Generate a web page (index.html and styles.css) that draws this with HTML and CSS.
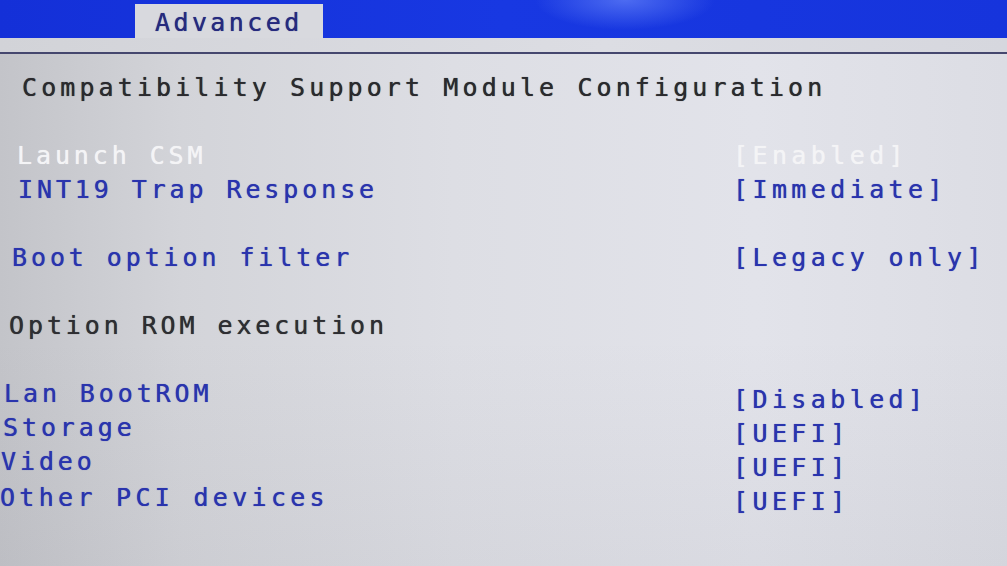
FILE: index.html
```html
<!DOCTYPE html>
<html lang="en">
<head>
<meta charset="utf-8">
<title>Advanced - CSM Configuration</title>
<link rel="stylesheet" href="styles.css">
</head>
<body>
<div class="screen">
  <header class="topbar">
    <div class="tab">Advanced</div>
  </header>
  <div class="band"></div>
  <div class="rule"></div>
  <main class="panel">
    <h1 class="title">Compatibility Support Module Configuration</h1>

    <section class="group">
      <div class="row"><span class="label ind-17 muted">Launch CSM</span><span class="value muted">[Enabled]</span></div>
      <div class="row"><span class="label ind-18 link">INT19 Trap Response</span><span class="value link">[Immediate]</span></div>
    </section>

    <section class="group">
      <div class="row"><span class="label ind-12 link">Boot option filter</span><span class="value link">[Legacy only]</span></div>
    </section>

    <section class="group">
      <div class="row"><span class="label ind-9 dark">Option ROM execution</span></div>
    </section>

    <section class="group">
      <div class="row"><span class="label ind-4 link">Lan BootROM</span><span class="value link lower">[Disabled]</span></div>
      <div class="row"><span class="label ind-3 link">Storage</span><span class="value link lower">[UEFI]</span></div>
      <div class="row"><span class="label ind-1 link">Video</span><span class="value link lower">[UEFI]</span></div>
      <div class="row"><span class="label ind-0 link wide">Other PCI devices</span><span class="value link lower">[UEFI]</span></div>
    </section>
  </main>
</div>
</body>
</html>
```

FILE: styles.css
```css
html, body {
  margin: 0;
  padding: 0;
}

body {
  width: 1007px;
  height: 566px;
  overflow: hidden;
  background: #d6d7dc;
  font-family: "DejaVu Sans Mono", "Liberation Mono", monospace;
}

.screen {
  width: 1007px;
  height: 566px;
  display: flex;
  flex-direction: column;
  background:
    linear-gradient(180deg, rgba(0,0,0,0) 60%, rgba(120,120,130,0.08) 100%),
    linear-gradient(90deg, #c3c4c9 0%, #d3d4d9 18%, #dddee4 45%, #e2e3ea 75%, #dcdde4 100%);
}

.topbar {
  height: 38px;
  flex: none;
  display: flex;
  align-items: flex-end;
  padding-left: 135px;
  background:
    radial-gradient(ellipse 90px 30px at 625px 0px, rgba(120,150,255,0.55), rgba(20,50,225,0) 100%),
    linear-gradient(90deg, #1430d8 0%, #1838e2 50%, #1634dc 100%);
}

.tab {
  width: 168px;
  height: 34px;
  padding-left: 20px;
  background: #d8d9de;
  color: #262a7e;
  font-size: 25px;
  letter-spacing: 3.4px;
  line-height: 38px;
  text-shadow: 0 0 0.7px currentColor;
}

.band {
  height: 14px;
  flex: none;
  background: linear-gradient(90deg, #d2d3d8, #dcdde3 60%, #d6d7de);
}

.rule {
  height: 2px;
  flex: none;
  background: #45476e;
}

.panel {
  padding-top: 17px;
}

.title {
  margin: 0;
  padding-left: 22px;
  height: 34px;
  font-size: 25px;
  font-weight: normal;
  line-height: 34px;
  letter-spacing: 4.1px;
  color: #2a2a2e;
  white-space: nowrap;
  text-shadow: 0 0 0.7px currentColor;
}

.group {
  margin-top: 34px;
}

.row {
  display: grid;
  grid-template-columns: 733px 1fr;
  height: 34px;
  font-size: 25px;
  line-height: 34px;
  letter-spacing: 3.9px;
  white-space: nowrap;
  text-shadow: 0 0 0.7px currentColor;
}

.label {
  grid-column: 1;
}

.label.wide {
  letter-spacing: 4.3px;
  position: relative;
  top: 2px;
}

.value {
  grid-column: 2;
  letter-spacing: 4.4px;
}

.value.lower {
  position: relative;
  top: 6px;
}

.ind-17 { padding-left: 17px; }
.ind-18 { padding-left: 18px; }
.ind-12 { padding-left: 12px; }
.ind-9 { padding-left: 9px; }
.ind-4 { padding-left: 4px; }
.ind-3 { padding-left: 3px; }
.ind-1 { padding-left: 1px; }
.ind-0 { padding-left: 0; }

.link {
  color: #2a34ad;
}

.muted {
  color: #f4f4f6;
}

.dark {
  color: #2e2e32;
}
```
